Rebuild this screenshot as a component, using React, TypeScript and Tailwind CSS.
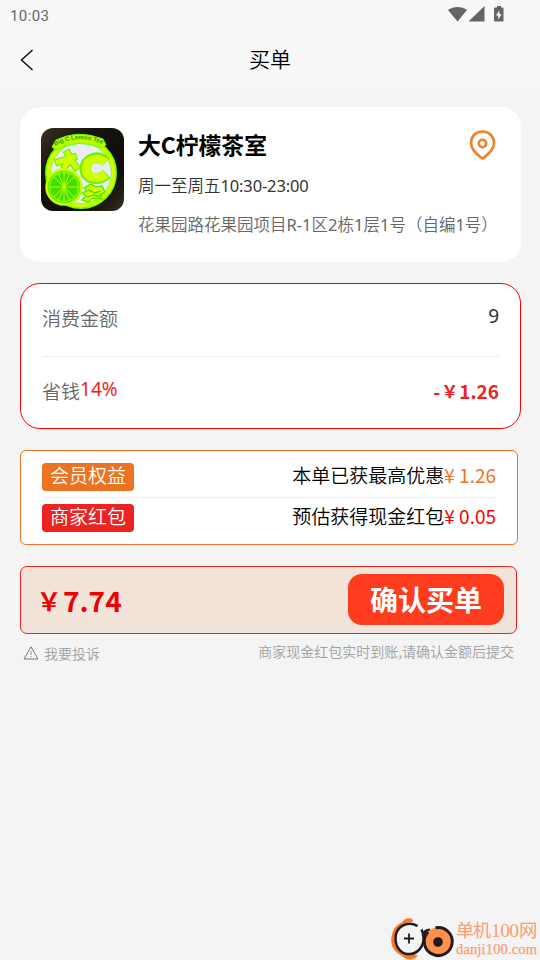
import type { ReactNode } from 'react';

const benefits = [
  { tag: '会员权益', text: '本单已获最高优惠', amount: '¥ 1.26', tagClass: 'bg-[#eb7321]', amountClass: 'text-[#f27321]' },
  { tag: '商家红包', text: '预估获得现金红包', amount: '¥ 0.05', tagClass: 'bg-[#ec2223]', amountClass: 'text-[#ff0000]' },
];

const address = '花果园路花果园项目R-1区2栋1层1号（自编1号）';

function StatusBar() {
  return (
    <div className="flex h-[31px] items-center justify-between pr-[35px] pl-[10px]">
      <span className="pt-px font-['Roboto',sans-serif] text-[15px] leading-[31px] font-normal tracking-[0.4px] text-[#666]">10:03</span>
      <svg width="57" height="18" viewBox="0 0 57 18" fill="#646464" className="mb-[2px]">
        <path d="M0 4C5.500 0 13.500 0 19 4L9.500 15.500z" />
        <path d="M36.500 0V15.500H20.500z" />
        <path d="M49 0h4v1.500h1.700q.8 0 .8.8v12.400q0 .8-.8.8h-7.900q-.8 0-.8-.8V2.300q0-.8.8-.8H49z" />
        <path d="M51.300 4.500l-3.300 5h2.300v4l3.300-5.200h-2.200z" fill="#fff" />
      </svg>
    </div>
  );
}

function ShopLogo() {
  return (
    <svg width="83" height="83" viewBox="0 0 83 83" className="shrink-0 rounded-[12px]">
      <defs>
        <linearGradient id="logo-bg" x1="0" y1="0" x2="1" y2="1">
          <stop offset="0" stopColor="#3a3022" />
          <stop offset=".3" stopColor="#17140f" />
          <stop offset=".75" stopColor="#0f0d09" />
          <stop offset="1" stopColor="#3a2e22" />
        </linearGradient>
        <path id="logo-arc" d="M14 18Q38 5 63 17" />
      </defs>
      <rect width="83" height="83" fill="url(#logo-bg)" />
      <circle cx="40" cy="45" r="33" fill="#e9edfa" stroke="#6fff00" strokeWidth="6" />
      <circle cx="40" cy="45" r="32.500" fill="none" stroke="#d2ff00" strokeWidth="3.800" />
      <path d="M11 19L15 12Q37 1 62 11L65 17L60 20Q38 10 15 22z" fill="#b8ff00" stroke="#60ff00" strokeWidth="1" />
      <text fill="#3d9900" fontSize="6.200" fontWeight="700" className="font-['Liberation_Sans',sans-serif]">
        <textPath href="#logo-arc" textLength="49">Big C Lemon Tea</textPath>
      </text>
      {/* the 大 and C marks: green outline first, yellow body over it */}
      <g fill="none" stroke="#6df500">
        <path d="M14 35L36 28M25 22L30 32L37 42M30 30L22 41" strokeWidth="7.500" />
        <path d="M65 34C58 26 44 30 44 41C44 51 57 54 66 46" strokeWidth="11" />
      </g>
      <g fill="none" stroke="#d0ff00">
        <path d="M15 34.700L35 28.300M25.500 23L30 32L36.500 41M30 30L22.500 40" strokeWidth="5" />
        <path d="M64.500 34.500C57 28 45 31 45 41C45 50 57 52 65 46" strokeWidth="8.500" />
      </g>
      <path d="M43 60l7-4 5 3 6-1 3 6-5 3 2 4-9-1-5 4-6-2 4-4-4-3 5-2z" fill="#d7ff00" stroke="#54f000" strokeWidth="1.500" />
      <path d="M47 62l7 3 6-2M46 69l7-2 6 2" stroke="#55df00" fill="none" strokeWidth="1.500" />
      <circle cx="23" cy="59" r="17.500" fill="#65ed00" stroke="#c8ff00" strokeWidth="2.500" />
      <circle cx="23" cy="59" r="14.500" fill="#42df00" stroke="#8cff00" strokeWidth="1" />
      <path d="M23 44v30M8 59h30M12.500 48.500l21 21M33.500 48.500l-21 21M17.300 45.100l11.400 27.800M28.700 45.100L17.300 72.900" stroke="#b7ff00" strokeWidth="1" />
      <circle cx="23" cy="59" r="2" fill="#d7ff00" />
    </svg>
  );
}

function AmountRow({ label, children }: { label: ReactNode; children: ReactNode }) {
  return (
    <div className="flex h-[72px] items-center justify-between pb-[4px]">
      <span className="flex text-[19px] leading-[28px] text-[#666]">{label}</span>
      {children}
    </div>
  );
}

function Watermark() {
  return (
    <div className="absolute right-0 bottom-0 flex h-[44px] w-[150px]">
      <svg width="66" height="44" viewBox="0 0 66 44" fill="none" className="shrink-0">
        <path d="M12 6.500C14 3 17 1.500 21 2.500C23 3.500 23.500 5 22 6C13 6 6 12 5 20C3.500 30 9 37 17 39C20 39.500 23 38 27 39C28 40 27 41 25 42C20 44.500 17 44 12 40C4 36 0 29 1.500 21C2.500 14 6 9 12 6.500z" fill="#ff761d" />
        <path d="M27.500 10C17 4 5.500 11 5.500 22.500C5.500 33 13 39 21 38C28 37 34 30 33.500 22C33.500 19 33 16 31.500 13.500" stroke="#211b20" strokeWidth="2.500" />
        <path d="M33 20C34 16 37 14 40 14" stroke="#211b20" strokeWidth="3" />
        <circle cx="48" cy="25.500" r="14" fill="#ff914d" />
        <path d="M45.500 11.800A14 14 0 1 1 38 16" stroke="#211b20" strokeWidth="3" />
        <circle cx="48" cy="26" r="4.800" fill="#211b20" />
        <path d="M19 17.500v10M14 22.500h10" stroke="#211b20" strokeWidth="1.800" />
      </svg>
      <svg width="84" height="44" viewBox="0 0 84 44" fill="#fa9d70" className="shrink-0 font-['Liberation_Serif','Noto_Sans_CJK_SC',serif] font-normal">
        <text x="0" y="21" fontSize="18" textLength="35">单机</text>
        <text x="35" y="21" fontSize="19.500" textLength="28">100</text>
        <text x="63" y="21" fontSize="18.500">网</text>
        <text x="0" y="38" fontSize="14.500" textLength="81" stroke="#fa9d70" strokeWidth=".25">danji100.com</text>
      </svg>
    </div>
  );
}

export default function App() {
  return (
    <div className="relative h-[960px] w-[540px] overflow-hidden bg-[#f4f4f4] font-['Noto_Sans_CJK_SC',sans-serif] font-[350] text-black">
      <header className="h-[87px] bg-[#f8f8f8]">
        <StatusBar />
        <div className="flex h-[56px] items-center pl-[20px]">
          <svg width="14" height="22" viewBox="0 0 14 22" fill="none" stroke="#111" strokeWidth="1.500" className="mt-px">
            <path d="M12.500 1L1.500 11L12.500 21" />
          </svg>
          <h1 className="mb-[3px] flex-1 pr-[34px] text-center text-[21px] leading-[30px] font-[350]">买单</h1>
        </div>
      </header>

      <section className="mt-[20px] ml-[20px] flex h-[155px] w-[501px] rounded-[20px] bg-white pt-[21px] pl-[21px]">
        <ShopLogo />
        <div className="ml-[14px] flex-1 whitespace-nowrap">
          <div className="flex h-[36px] justify-between pr-[25px]">
            <h2 className="-mt-px text-[22.800px] leading-[35px] font-bold">大C柠檬茶室</h2>
            <svg width="27" height="30" viewBox="0 0 27 30" fill="none" stroke="#ee802f" strokeWidth="2.600" className="mt-[2px]">
              <path d="M13.500 1.500C6.800 1.500 2 6.400 2 13C2 19.500 7.500 23.500 12.200 27.800Q13.500 29 14.800 27.800C19.500 23.500 25 19.500 25 13C25 6.400 20.200 1.500 13.500 1.500z" />
              <circle cx="13.500" cy="13.500" r="3.700" />
            </svg>
          </div>
          <p className="mt-[9px] font-['Noto_Sans','Noto_Sans_CJK_SC',sans-serif] text-[16.500px] leading-[26px] text-[#333]">
            周一至周五<span className="font-normal tracking-[-0.15px]">10:30-23:00</span>
          </p>
          <p className="mt-[13px] font-['Noto_Sans','Noto_Sans_CJK_SC',sans-serif] text-[16.500px] leading-[26px] text-[#666]">
            {address.split(/([R\d-]+)/).map((part, i) => (
              <span key={i} className={i % 2 ? 'font-normal' : ''}>{part}</span>
            ))}
          </p>
        </div>
      </section>

      <section className="mt-[21px] ml-[20px] h-[146px] w-[501px] rounded-[20px] border border-[#ff0000] bg-white px-[21px]">
        <AmountRow label="消费金额">
          <span className="mb-[5px] font-['Noto_Sans',sans-serif] text-[19px] leading-[28px] font-normal text-[#333]">9</span>
        </AmountRow>
        <div className="h-px bg-[#eee]" />
        <AmountRow label={<>省钱<span className="-mt-[2px] font-['Noto_Sans',sans-serif] font-normal text-[#ec2223]">14%</span></>}>
          <span className="flex text-[19px] leading-[28px] font-bold text-[#ec2223]">
            -<span className="w-[19px] text-center text-[17px]">￥</span>1.26
          </span>
        </AmountRow>
      </section>

      <section className="mt-[21px] ml-[20px] h-[95px] w-[498px] rounded-[6px] border border-[#eb7321] bg-white pt-[6px] pr-[21px] pl-[21px]">
        {benefits.map((b, i) => (
          <div key={b.tag} className={i === 0 ? 'flex h-[41px] items-center justify-between border-b border-[#eee]' : 'flex h-[40px] items-center justify-between'}>
            <span className={`${b.tagClass} h-[28px] w-[92px] rounded-[4px] text-center text-[19px] leading-[24px] text-white`}>{b.tag}</span>
            <span className="mb-[4px] text-[19px] leading-[28px]">
              {b.text}<span className={`${b.amountClass} font-normal`}>{b.amount}</span>
            </span>
          </div>
        ))}
      </section>

      <section className="mt-[21px] ml-[20px] flex h-[68px] w-[497px] items-center justify-between rounded-[7px] border-[1.500px] border-[#ec2223] bg-[#f2e4d9] pr-[12px] pb-[2px] pl-[14px]">
        <span className="mt-[2px] flex text-[28px] leading-[42px] font-bold text-[#ee0000]">
          <span className="w-[28px] text-center text-[25px]">￥</span>7.74
        </span>
        <button className="h-[51px] w-[156px] rounded-[14px] bg-[#ff3b20] text-[28px] leading-[51px] font-bold text-white">确认买单</button>
      </section>

      <div className="ml-[23px] flex w-[491px] justify-between pt-[7px] text-[14px] leading-[20px] text-[#a0a0a0]">
        <span className="flex items-center pt-[2px]">
          <svg width="16" height="14" viewBox="0 0 16 14" fill="none" stroke="#777" className="mr-[5px]">
            <path d="M8 .8L15 13H1z" />
            <path d="M8 5v4M8 10v1" strokeWidth=".8" />
          </svg>
          我要投诉
        </span>
        <span>商家现金红包实时到账,请确认金额后提交</span>
      </div>

      <Watermark />
    </div>
  );
}
